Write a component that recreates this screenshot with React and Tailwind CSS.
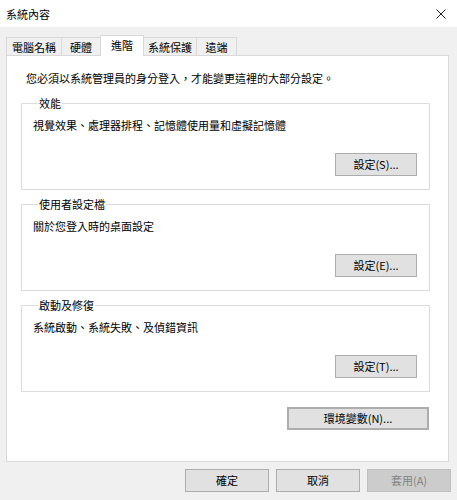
const tabs = [
  { label: '電腦名稱', w: 'w-[56px]' },
  { label: '硬體', w: 'w-[40px]' },
  { label: '進階', w: 'w-[44px]', active: true },
  { label: '系統保護', w: 'w-[54px]' },
  { label: '遠端', w: 'w-[41px]' },
];

const groups = [
  { title: '效能', text: '視覺效果、處理器排程、記憶體使用量和虛擬記憶體', button: '設定(S)...' },
  { title: '使用者設定檔', text: '關於您登入時的桌面設定', button: '設定(E)...' },
  { title: '啟動及修復', text: '系統啟動、系統失敗、及偵錯資訊', button: '設定(T)...' },
];

function Button({ children, className = '' }) {
  return (
    <button className={`h-[23px] bg-[#e1e1e1] border border-[#adadad] text-black text-[11px] leading-none flex items-center justify-center ${className}`}>
      {children}
    </button>
  );
}

export default function App() {
  return (
    <div
      className="w-[457px] h-[500px] bg-[#f0f0f0] flex flex-col text-[11px] text-black overflow-hidden"
      style={{ fontFamily: '"Noto Sans CJK TC", "Noto Sans", sans-serif' }}
    >
      {/* 標題列 */}
      <div className="h-[27px] bg-white flex items-center justify-between pl-[6px] pr-[11px]">
        <span className="leading-[14px]">系統內容</span>
        <svg width="10" height="10" viewBox="0 0 10 10" className="mt-[1px]">
          <path d="M0.5 0.5 L9.5 9.5 M9.5 0.5 L0.5 9.5" stroke="#222" strokeWidth="1" fill="none" />
        </svg>
      </div>

      {/* 分頁 */}
      <div className="flex items-end h-[20px] mt-[8px] pl-[6px]">
        {tabs.map((t, i) => (
          <div
            key={t.label}
            className={`${t.w} ${i > 0 ? '-ml-px' : ''} flex items-center justify-center border border-b-0 border-[#d9d9d9] leading-[14px] ${
              t.active ? 'h-[21px] -mb-px relative z-10 bg-white pb-[3px]' : 'h-[18px] bg-[#f0f0f0]'
            }`}
          >
            {t.label}
          </div>
        ))}
      </div>

      {/* 內容面板 */}
      <div className="ml-[6px] w-[443px] h-[407px] bg-white border border-[#d9d9d9] flex flex-col pt-[15px]">
        <p className="ml-[19px] leading-[14px]">您必須以系統管理員的身分登入，才能變更這裡的大部分設定。</p>

        <div className="ml-[14px] w-[409px] flex flex-col mt-[11px]">
          {groups.map((g, i) => (
            <fieldset
              key={g.title}
              className={`border border-[#dcdcdc] pl-[11px] pr-[12px] pb-[13px] flex flex-col ${i > 0 ? 'mt-[7px]' : ''}`}
            >
              <legend className="ml-[5px] px-[1px] leading-[14px]">{g.title}</legend>
              <p className="mt-[8px] leading-[14px]">{g.text}</p>
              <Button className="w-[82px] self-end mt-[21px]">{g.button}</Button>
            </fieldset>
          ))}

          <Button className="w-[142px] self-end mr-[1px] mt-[15px] border-2 border-[#0078d7]">環境變數(N)...</Button>
        </div>
      </div>

      {/* 底部按鈕 */}
      <div className="flex justify-end gap-[7px] pr-[6px] mt-[7px]">
        <Button className="w-[84px]">確定</Button>
        <Button className="w-[84px]">取消</Button>
        <button className="w-[84px] h-[23px] bg-[#cccccc] border border-[#bfbfbf] text-[#838383] text-[11px] leading-none flex items-center justify-center">
          套用(A)
        </button>
      </div>
    </div>
  );
}
